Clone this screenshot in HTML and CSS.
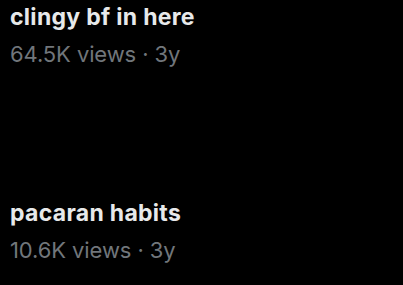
FILE: index.html
```html
<!DOCTYPE html>
<html lang="en">
<head>
    <meta charset="UTF-8">
    <meta name="viewport" content="width=device-width, initial-scale=1.0">
    <title>Videos</title>
    <link rel="stylesheet" href="styles.css">
</head>
<body>
    <div class="list">
        <div class="item">
            <div class="title">clingy bf in here</div>
            <div class="meta">64.5K views · 3y</div>
        </div>
        <div class="item">
            <div class="title">pacaran habits</div>
            <div class="meta">10.6K views · 3y</div>
        </div>
    </div>
</body>
</html>
```

FILE: styles.css
```css
body {
    margin: 0;
    background: #000;
    font-family: 'Inter', 'Roboto', sans-serif;
}
.list {
    display: flex;
    flex-direction: column;
    gap: 131px;
    padding: 3px 10px 0;
}
.item {
    display: flex;
    flex-direction: column;
    gap: 9px;
}
.title {
    color: #e7e9ea;
    font-size: 23px;
    font-weight: 700;
    line-height: 28px;
    letter-spacing: 0.3px;
}
.meta {
    color: #71767b;
    font-size: 22px;
    line-height: 28px;
    letter-spacing: -0.1px;
}
```
